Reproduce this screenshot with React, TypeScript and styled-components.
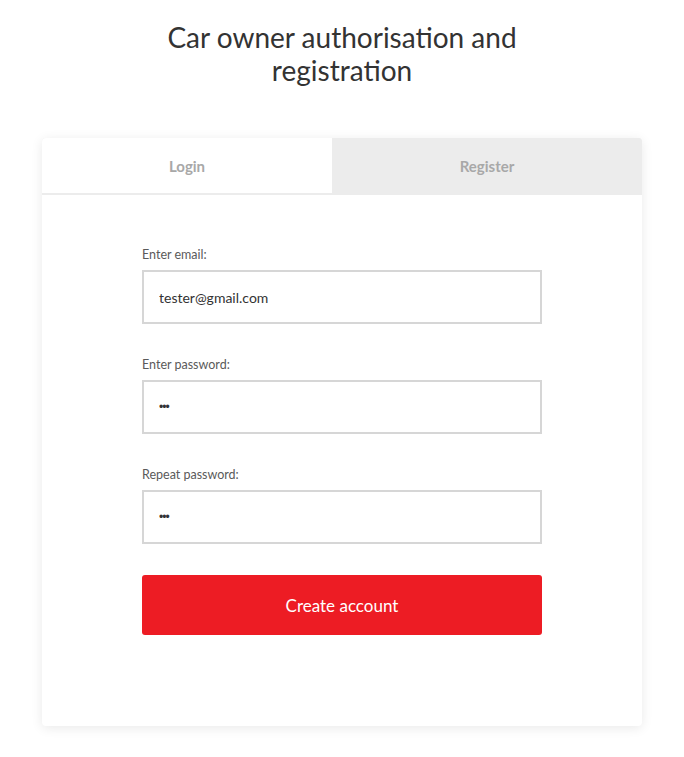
import React, { useState } from "react";
import styled, { createGlobalStyle } from "styled-components";

const GlobalStyle = createGlobalStyle`
  body {
    margin: 0;
    background: #fff;
    font-family: Lato, "Open Sans", sans-serif;
    color: #333;
  }
`;

const Page = styled.div`
  display: flex;
  flex-direction: column;
  align-items: center;
  padding: 21px 0 30px;
`;

const Title = styled.h1`
  width: 400px;
  margin: 0 0 51px;
  font-size: 28px;
  font-weight: 400;
  line-height: 33px;
  text-align: center;
  color: #333;
`;

const Card = styled.div`
  width: 600px;
  background: #fff;
  border-radius: 4px;
  box-shadow: 0 2px 12px rgba(0, 0, 0, 0.09);
  overflow: hidden;
`;

const Tabs = styled.div`
  display: flex;
  background: #ececec;
  padding-bottom: 2px;
`;

const Tab = styled.button<{ $active?: boolean }>`
  flex: ${(p) => (p.$active ? "0 0 290px" : "1")};
  height: 55px;
  border: 0;
  background: ${(p) => (p.$active ? "#fff" : "#ececec")};
  font-family: Lato, "Open Sans", sans-serif;
  font-size: 15px;
  font-weight: 700;
  color: #a8a8a8;
  cursor: pointer;
`;

const Form = styled.form`
  display: flex;
  flex-direction: column;
  width: 400px;
  margin: 0 auto;
  padding: 52px 0 91px;
`;

const Field = styled.div`
  display: flex;
  flex-direction: column;
  margin-bottom: 33px;
  &:last-of-type {
    margin-bottom: 31px;
  }
`;

const Label = styled.label`
  font-size: 12.5px;
  font-weight: 400;
  color: #5a5a5a;
  margin-bottom: 8px;
`;

const Input = styled.input`
  box-sizing: border-box;
  height: 54px;
  border: 2px solid #d6d6d6;
  padding: 0 15px;
  font-family: Lato, "Open Sans", sans-serif;
  font-size: 14px;
  color: #333;
  outline: none;

  &[type="password"] {
    font-family: "Liberation Sans", sans-serif;
    font-size: 12px;
    letter-spacing: -1px;
  }
`;

const Submit = styled.button`
  height: 60px;
  border: 0;
  border-radius: 3px;
  background: #ed1c24;
  color: #fff;
  font-family: Lato, "Open Sans", sans-serif;
  font-size: 17px;
  cursor: pointer;
`;

export default function App() {
  const [tab, setTab] = useState("register");
  return (
    <>
      <GlobalStyle />
      <Page>
        <Title>Car owner authorisation and registration</Title>
        <Card>
          <Tabs>
            <Tab $active onClick={() => setTab("login")}>
              Login
            </Tab>
            <Tab onClick={() => setTab("register")}>Register</Tab>
          </Tabs>
          <Form onSubmit={(e) => e.preventDefault()} data-tab={tab}>
            <Field>
              <Label>Enter email:</Label>
              <Input type="email" defaultValue="tester@gmail.com" />
            </Field>
            <Field>
              <Label>Enter password:</Label>
              <Input type="password" defaultValue="123" />
            </Field>
            <Field>
              <Label>Repeat password:</Label>
              <Input type="password" defaultValue="123" />
            </Field>
            <Submit type="submit">Create account</Submit>
          </Form>
        </Card>
      </Page>
    </>
  );
}
